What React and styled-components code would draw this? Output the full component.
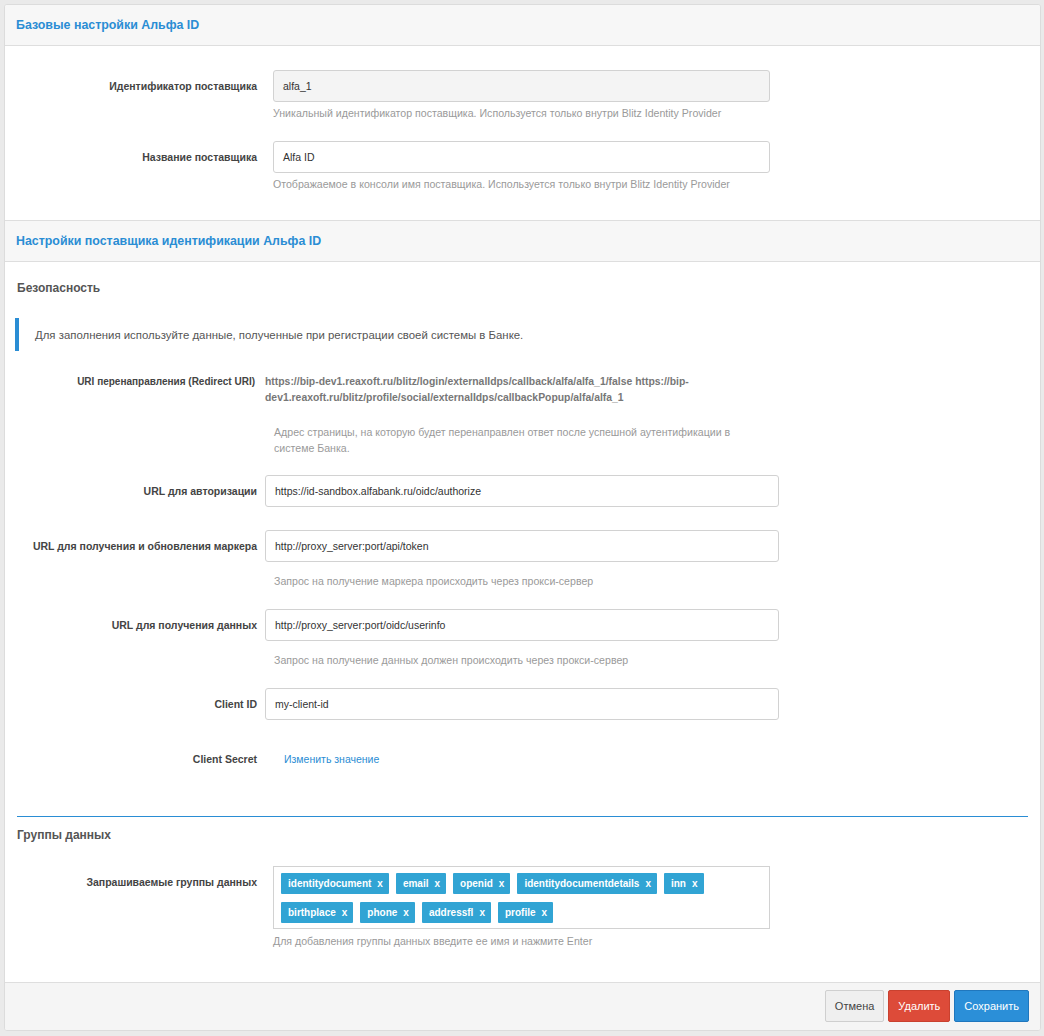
import React from 'react';
import styled, { createGlobalStyle } from 'styled-components';

const GlobalStyle = createGlobalStyle`
  html, body {
    margin: 0;
    padding: 0;
    background: #eaeaea;
  }
  body {
    font-family: "Liberation Sans", Arial, Helvetica, sans-serif;
    color: #444;
  }
`

const Page = styled.div`
  padding: 4px 3px 5px 4px;
  min-height: 1027px;
`

const Panel = styled.div`
  background: #fff;
  border: 1px solid #dcdcdc;
  border-radius: 3px;
  overflow: hidden;
`

const SectionHeader = styled.div`
  height: 40px;
  display: flex;
  align-items: center;
  padding: 0 11px;
  background: #f7f7f7;
  border-bottom: 1px solid #dedede;
  border-top: ${p => (p.$first ? '0' : '1px solid #dedede')};
`

const SectionTitle = styled.h3`
  margin: 0;
  font-size: 12.4px;
  font-weight: bold;
  color: #2a8dd4;
`

const Body = styled.div`
  padding: ${p => p.$pad || '24px 12px 28px 0'};
`

const Row = styled.div`
  display: flex;
  align-items: flex-start;
  margin-top: ${p => p.$mt || 0}px;
  margin-bottom: ${p => p.$mb || 0}px;
`

const Label = styled.div`
  width: ${p => p.$w || 252}px;
  flex: none;
  text-align: right;
  font-size: ${p => p.$fs || 10.5}px;
  font-weight: bold;
  color: #444;
  line-height: 16px;
  padding-top: ${p => (p.$pt === undefined ? 8 : p.$pt)}px;
`

const Control = styled.div`
  margin-left: ${p => p.$ml || 16}px;
  width: ${p => p.$w || 497}px;
`

const Input = styled.div`
  box-sizing: border-box;
  height: 32px;
  border: 1px solid #d2d2d2;
  border-radius: 3px;
  background: ${p => (p.$readonly ? '#f4f4f4' : '#fff')};
  font-size: 10.5px;
  color: #333;
  display: flex;
  align-items: center;
  padding: 0 9px;
`

const Help = styled.div`
  font-size: 10.6px;
  color: #9a9a9a;
  line-height: 16px;
  margin-top: ${p => p.$mt || 3}px;
  margin-left: ${p => p.$ml || 0}px;
  width: ${p => (p.$w ? `${p.$w}px` : 'auto')};
`

const SubHeading = styled.h4`
  margin: 0;
  font-size: 12px;
  font-weight: bold;
  color: #555;
  line-height: 18px;
  padding-left: 12px;
`

const Callout = styled.div`
  margin: 21px 0 23px 10px;
  height: 33px;
  border-left: 4px solid #2a8dd4;
  display: flex;
  align-items: center;
  padding-left: 16px;
  font-size: 11.4px;
  color: #555;
`

const StaticValue = styled.div`
  font-size: 10.4px;
  font-weight: bold;
  color: #777;
  line-height: 16px;
  width: 440px;
`

const Link = styled.a`
  font-size: 10.5px;
  color: #2a8dd4;
  text-decoration: none;
  line-height: 16px;
  margin-left: 27px;
`

const Divider = styled.div`
  height: 1px;
  background: #2a8dd4;
  margin: 49px 0 9px 12px;
`

const TagBox = styled.div`
  box-sizing: border-box;
  border: 1px solid #d2d2d2;
  height: 63px;
  padding: 6px 7px;
  display: flex;
  flex-wrap: wrap;
  align-content: flex-start;
  gap: 8px 7px;
`

const Tag = styled.span`
  height: 21px;
  background: #31a4d4;
  color: #fff;
  font-size: 10px;
  font-weight: bold;
  display: inline-flex;
  align-items: center;
  padding: 0 6px 0 7px;
  border-radius: 1px;
`

const TagX = styled.span`
  margin-left: 6px;
  font-size: 10px;
`

const Footer = styled.div`
  background: #f5f5f5;
  border-top: 1px solid #dedede;
  padding: 7px 11px 8px;
  display: flex;
  justify-content: flex-end;
  gap: 4px;
`

const variants = {
  default: { bg: '#efefef', border: '#cfcfcf', color: '#444' },
  danger: { bg: '#dd4b39', border: '#c9412f', color: '#fff' },
  primary: { bg: '#2b8fd8', border: '#2077bd', color: '#fff' },
}

const Button = styled.button`
  height: 32px;
  padding: 0 9px;
  font-family: inherit;
  font-size: 11px;
  border-radius: 2px;
  border: 1px solid ${p => variants[p.$v].border};
  background: ${p => variants[p.$v].bg};
  color: ${p => variants[p.$v].color};
  cursor: pointer;
`

const tags = [
  'identitydocument', 'email', 'openid', 'identitydocumentdetails', 'inn',
  'birthplace', 'phone', 'addressfl', 'profile',
]

function App() {
  return (
    <Page>
      <GlobalStyle />
      <Panel>
        <SectionHeader $first>
          <SectionTitle>Базовые настройки Альфа ID</SectionTitle>
        </SectionHeader>
        <Body>
          <Row $mb={20}>
            <Label>Идентификатор поставщика</Label>
            <Control>
              <Input $readonly>alfa_1</Input>
              <Help>Уникальный идентификатор поставщика. Используется только внутри Blitz Identity Provider</Help>
            </Control>
          </Row>
          <Row>
            <Label>Название поставщика</Label>
            <Control>
              <Input>Alfa ID</Input>
              <Help>Отображаемое в консоли имя поставщика. Используется только внутри Blitz Identity Provider</Help>
            </Control>
          </Row>
        </Body>

        <SectionHeader>
          <SectionTitle>Настройки поставщика идентификации Альфа ID</SectionTitle>
        </SectionHeader>
        <Body $pad="17px 12px 33px 0">
          <SubHeading>Безопасность</SubHeading>
          <Callout>Для заполнения используйте данные, полученные при регистрации своей системы в Банке.</Callout>

          <Row $mb={19}>
            <Label $w={250} $pt={0} $fs={10}>URI перенаправления (Redirect URI)</Label>
            <Control $ml={10} $w={480}>
              <StaticValue>
                https://bip-dev1.reaxoft.ru/blitz/login/externalIdps/callback/alfa/alfa_1/false https://bip-dev1.reaxoft.ru/blitz/profile/social/externalIdps/callbackPopup/alfa/alfa_1
              </StaticValue>
              <Help $mt={18} $ml={9} $w={470}>Адрес страницы, на которую будет перенаправлен ответ после успешной аутентификации в системе Банка.</Help>
            </Control>
          </Row>

          <Row $mb={23}>
            <Label>URL для авторизации</Label>
            <Control $ml={8} $w={514}>
              <Input>https://id-sandbox.alfabank.ru/oidc/authorize</Input>
            </Control>
          </Row>

          <Row $mb={20}>
            <Label>URL для получения и обновления маркера</Label>
            <Control $ml={8} $w={514}>
              <Input>http://proxy_server:port/api/token</Input>
              <Help $mt={11} $ml={9}>Запрос на получение маркера происходить через прокси-сервер</Help>
            </Control>
          </Row>

          <Row $mb={20}>
            <Label>URL для получения данных</Label>
            <Control $ml={8} $w={514}>
              <Input>http://proxy_server:port/oidc/userinfo</Input>
              <Help $mt={11} $ml={9}>Запрос на получение данных должен происходить через прокси-сервер</Help>
            </Control>
          </Row>

          <Row $mb={31}>
            <Label>Client ID</Label>
            <Control $ml={8} $w={514}>
              <Input>my-client-id</Input>
            </Control>
          </Row>

          <Row>
            <Label $pt={0}>Client Secret</Label>
            <Link href="#">Изменить значение</Link>
          </Row>

          <Divider />
          <SubHeading>Группы данных</SubHeading>

          <Row $mt={22}>
            <Label>Запрашиваемые группы данных</Label>
            <Control>
              <TagBox>
                {tags.map(t => (
                  <Tag key={t}>{t}<TagX>x</TagX></Tag>
                ))}
              </TagBox>
              <Help $mt={4}>Для добавления группы данных введите ее имя и нажмите Enter</Help>
            </Control>
          </Row>
        </Body>

        <Footer>
          <Button $v="default">Отмена</Button>
          <Button $v="danger">Удалить</Button>
          <Button $v="primary">Сохранить</Button>
        </Footer>
      </Panel>
    </Page>
  );
}

export default App;
